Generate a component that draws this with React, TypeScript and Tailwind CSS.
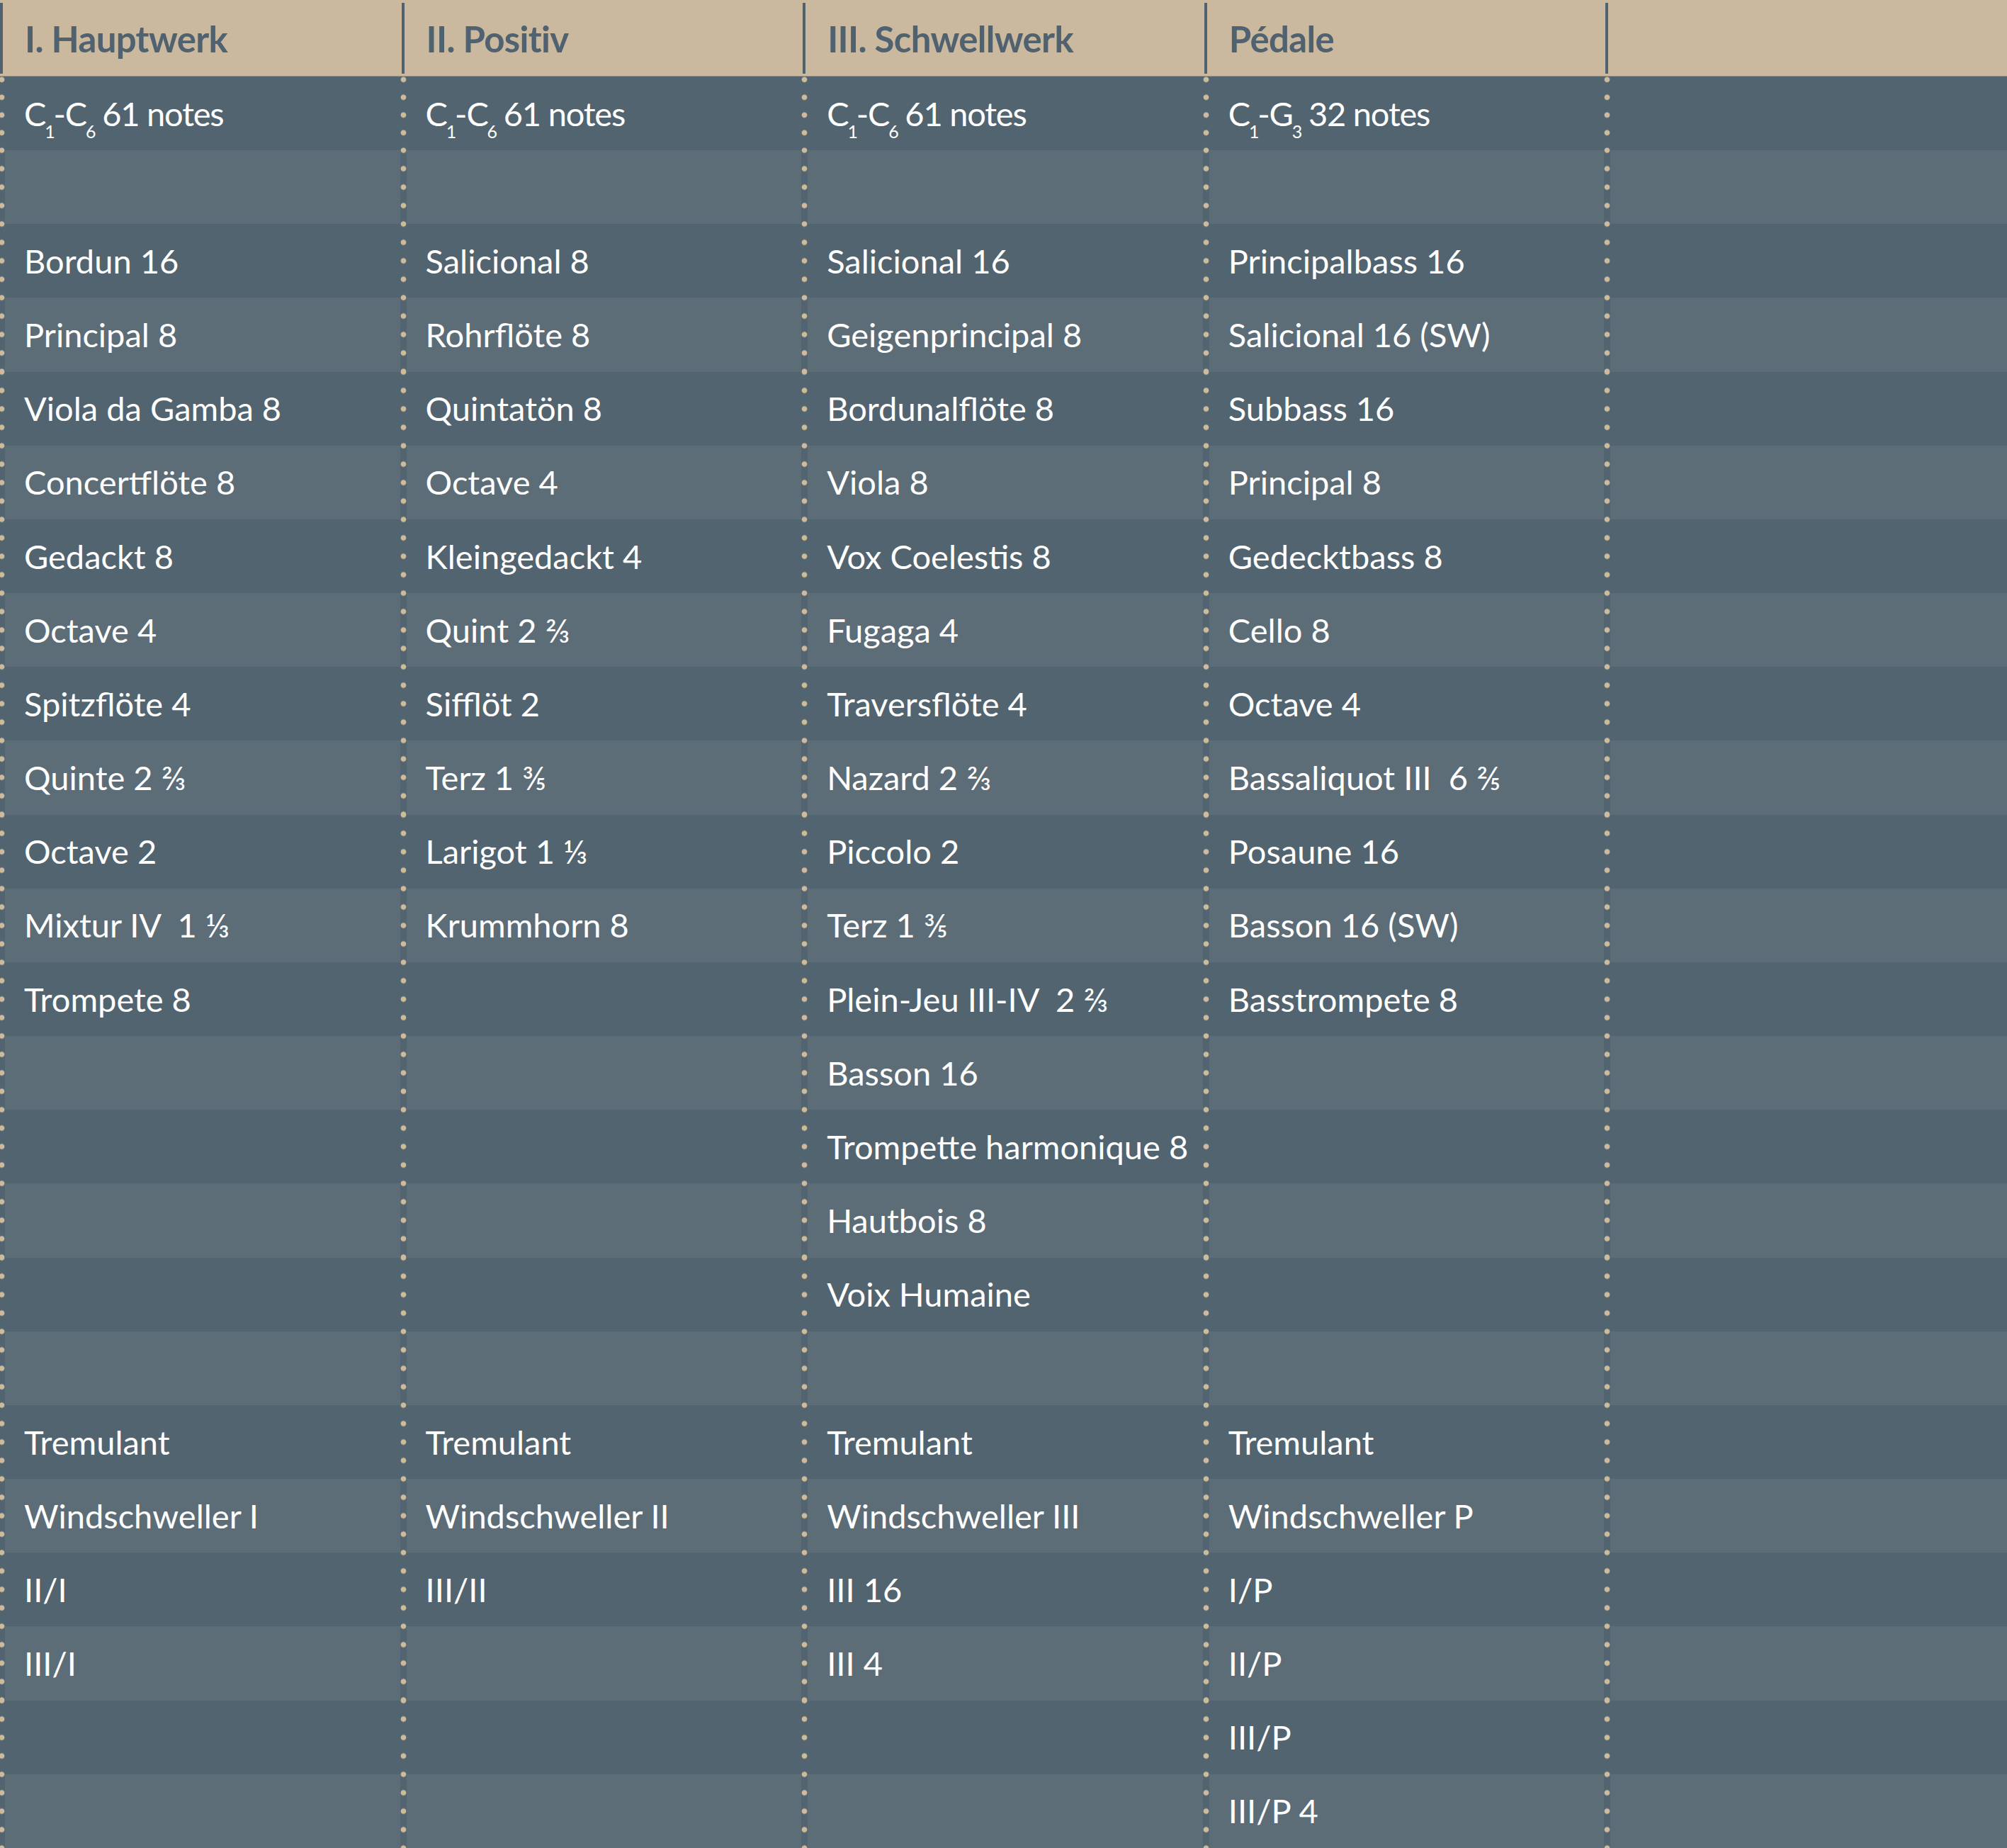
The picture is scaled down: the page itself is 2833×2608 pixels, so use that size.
import React from "react";

type Cell = React.ReactNode;

function Sub({ children }: { children: React.ReactNode }) {
  return <span className="relative top-[17px] text-[25px] leading-none mx-[-1px]">{children}</span>;
}

function Range({ a, sa, b, sb, rest }: { a: string; sa: string; b: string; sb: string; rest: string }) {
  return (
    <span className="tracking-[-1.2px]">
      {a}
      <Sub>{sa}</Sub>-{b}
      <Sub>{sb}</Sub> {rest}
    </span>
  );
}

const E = "";

const columns: { title: string; cells: Cell[] }[] = [
  {
    title: "I. Hauptwerk",
    cells: [
      <Range a="C" sa="1" b="C" sb="6" rest="61 notes" />,
      E,
      "Bordun 16",
      "Principal 8",
      "Viola da Gamba 8",
      "Concertflöte 8",
      "Gedackt 8",
      "Octave 4",
      "Spitzflöte 4",
      "Quinte 2 ⅔",
      "Octave 2",
      "Mixtur IV\u00a0 1 ⅓",
      "Trompete 8",
      E,
      E,
      E,
      E,
      E,
      "Tremulant",
      "Windschweller I",
      "II/I",
      "III/I",
      E,
      E,
    ],
  },
  {
    title: "II. Positiv",
    cells: [
      <Range a="C" sa="1" b="C" sb="6" rest="61 notes" />,
      E,
      "Salicional 8",
      "Rohrflöte 8",
      "Quintatön 8",
      "Octave 4",
      "Kleingedackt 4",
      "Quint 2 ⅔",
      "Sifflöt 2",
      "Terz 1 ⅗",
      "Larigot 1 ⅓",
      "Krummhorn 8",
      E,
      E,
      E,
      E,
      E,
      E,
      "Tremulant",
      "Windschweller II",
      "III/II",
      E,
      E,
      E,
    ],
  },
  {
    title: "III. Schwellwerk",
    cells: [
      <Range a="C" sa="1" b="C" sb="6" rest="61 notes" />,
      E,
      "Salicional 16",
      "Geigenprincipal 8",
      "Bordunalflöte 8",
      "Viola 8",
      "Vox Coelestis 8",
      "Fugaga 4",
      "Traversflöte 4",
      "Nazard 2 ⅔",
      "Piccolo 2",
      "Terz 1 ⅗",
      "Plein-Jeu III-IV\u00a0 2 ⅔",
      "Basson 16",
      "Trompette harmonique 8",
      "Hautbois 8",
      "Voix Humaine",
      E,
      "Tremulant",
      "Windschweller III",
      "III 16",
      "III 4",
      E,
      E,
    ],
  },
  {
    title: "Pédale",
    cells: [
      <Range a="C" sa="1" b="G" sb="3" rest="32 notes" />,
      E,
      "Principalbass 16",
      "Salicional 16 (SW)",
      "Subbass 16",
      "Principal 8",
      "Gedecktbass 8",
      "Cello 8",
      "Octave 4",
      "Bassaliquot III\u00a0 6 ⅖",
      "Posaune 16",
      "Basson 16 (SW)",
      "Basstrompete 8",
      E,
      E,
      E,
      E,
      E,
      "Tremulant",
      "Windschweller P",
      "I/P",
      "II/P",
      "III/P",
      "III/P 4",
    ],
  },
  {
    title: "",
    cells: Array.from({ length: 24 }, () => E),
  },
];

function Strip({ first }: { first: boolean }) {
  return first ? (
    <div className="-ml-[2px] w-[9px] shrink-0 bg-[#52646f] bg-[radial-gradient(circle,#cdbb9c_3.4px,transparent_4.3px)] bg-[length:9px_25px] bg-[position:0_-8.2px]" />
  ) : (
    <div className="-ml-[2px] w-[9px] shrink-0 bg-[#52646f] bg-[radial-gradient(circle,#cdbb9c_3.4px,transparent_4.3px)] bg-[length:9px_26.0417px] bg-[position:0_-13.0208px]" />
  );
}

export default function App() {
  const rows = Array.from({ length: 24 }, (_, r) => r);
  return (
    <div className="w-[2833px] h-[2608px] overflow-hidden font-['Lato','Noto_Sans',sans-serif] bg-[#52646f]">
      <div className="grid grid-cols-5 h-[108px] bg-[#cab99e] border-b border-[#8a9397]">
        {columns.map((c, i) => (
          <div key={i} className="flex items-center min-w-0">
            <div className="self-start mt-[4px] h-[100px] w-[4px] shrink-0 bg-[#506270]" />
            <div className="pl-[31px] pt-[2px] text-[51px] font-bold text-[#506270] leading-none whitespace-nowrap tracking-[-0.7px]">
              {c.title}
            </div>
          </div>
        ))}
      </div>
      <div className="grid h-[2500px] grid-rows-[repeat(24,minmax(0,1fr))]">
        {rows.map((r) => (
          <div
            key={r}
            className={
              r % 2 === 0
                ? "grid grid-cols-5 bg-[#52646f]"
                : "grid grid-cols-5 bg-[#5c6d78]"
            }
          >
            {columns.map((c, i) => (
              <div key={i} className="flex min-w-0">
                <Strip first={r === 0} />
                <div className="flex items-center pl-[27px] text-[47px] text-white leading-none whitespace-nowrap">
                  {c.cells[r]}
                </div>
              </div>
            ))}
          </div>
        ))}
      </div>
    </div>
  );
}
